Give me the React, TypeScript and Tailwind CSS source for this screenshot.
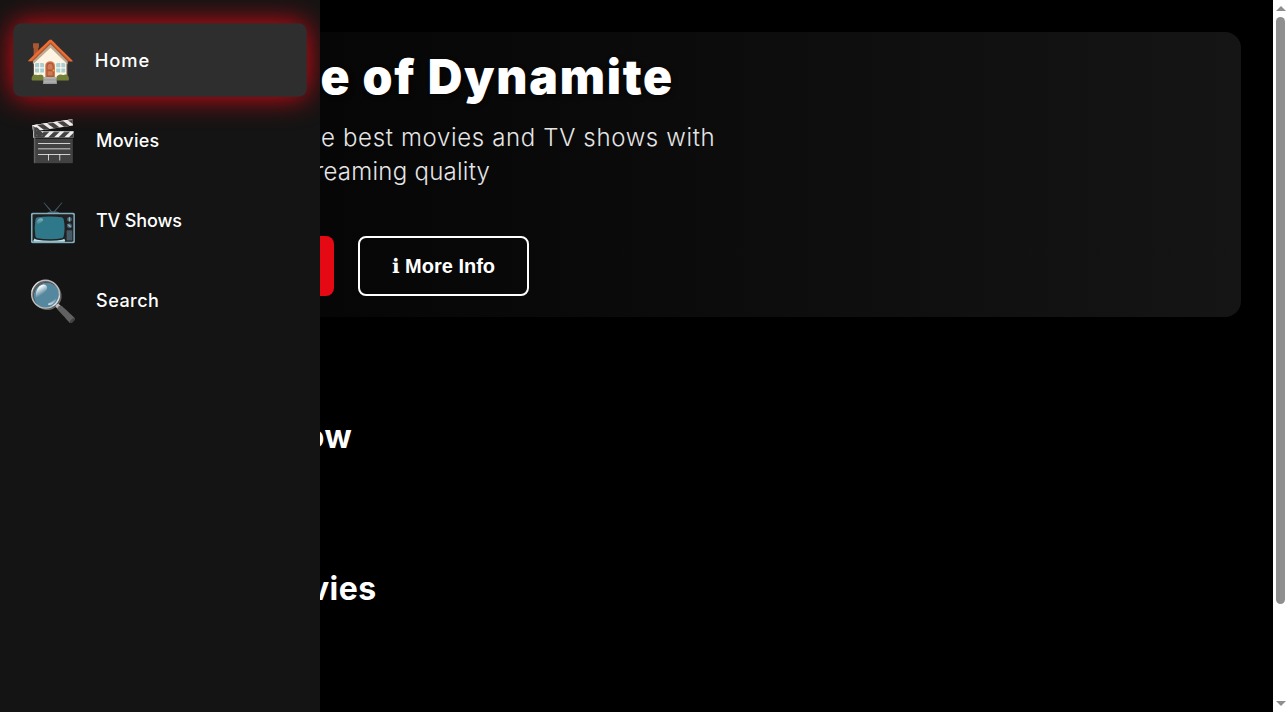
const items = [
  { e: "🏠", t: "Home", active: true, c: "tracking-[0.9px]" },
  { e: "🎬", t: "Movies", c: "tracking-[0.2px]" },
  { e: "📺", t: "TV Shows", c: "tracking-[-0.15px]" },
  { e: "🔍", t: "Search", c: "tracking-[0.5px]" },
];

export default function App() {
  return (
    <div className="relative flex h-screen overflow-hidden bg-black text-white font-['Inter',sans-serif]">
      <aside className="absolute left-0 top-0 z-10 flex h-full w-[320px] flex-col gap-2 overflow-hidden bg-[#141414] px-4 pt-6">
        {items.map((it) => (
          <div
            key={it.t}
            className={
              it.active
                ? "flex h-[72px] scale-[1.02] items-center gap-5 rounded-lg bg-[#2e2e2e] px-3 shadow-[0_0_28px_#e50914]"
                : "flex h-[72px] items-center gap-5 px-3"
            }
          >
            <span className="mt-[3px] w-12 text-center text-[40px] leading-none font-['Noto_Color_Emoji',sans-serif]">{it.e}</span>
            <span className={"mt-0.5 text-lg font-medium " + it.c}>{it.t}</span>
          </div>
        ))}
      </aside>
      <main className="min-w-0 flex-1 pl-[128px] pr-8 pt-8">
        <section className="flex h-[285px] flex-col rounded-2xl bg-gradient-to-r from-[#040404] to-[#151515] pl-[60px]">
          <h1 className="mt-[13px] text-5xl leading-[64px] font-black tracking-[1.75px] [text-shadow:2px_2px_4px_rgba(0,0,0,0.5)]">House of Dynamite</h1>
          <p className="mt-3 text-2xl leading-[34px] font-light tracking-[0.65px] text-[#e5e5e5]">
            Discover the best movies and TV shows with
            <br />
            <span className="tracking-[0.25px]">premium streaming quality</span>
          </p>
          <div className="mt-[47px] flex gap-6">
            <button className="h-[60px] w-[146px] rounded-lg bg-[#e50914] font-['Liberation_Sans','DejaVu_Sans',sans-serif] text-xl font-bold">▶ Play Now</button>
            <button className="h-[60px] w-[171px] rounded-lg border-2 border-white font-['Liberation_Sans','DejaVu_Sans',sans-serif] text-xl font-bold">ℹ More Info</button>
          </div>
        </section>
        <h2 className="mt-[96px] text-[32px] leading-[48px] font-bold tracking-[0.5px]">Trending Now</h2>
        <h2 className="mt-[104px] text-[32px] leading-[48px] font-bold tracking-[0.5px]">Popular Movies</h2>
      </main>
      <div className="flex w-[15px] shrink-0 flex-col items-center bg-white py-[6px]">
        <div className="h-0 w-0 border-x-[5px] border-b-[5px] border-x-transparent border-b-[#8f8f8f]" />
        <div className="mt-[6px] h-[587px] w-[9px] rounded-full bg-[#8f8f8f]" />
        <div className="mt-auto h-0 w-0 border-x-[5px] border-t-[5px] border-x-transparent border-t-[#8f8f8f]" />
      </div>
    </div>
  );
}
